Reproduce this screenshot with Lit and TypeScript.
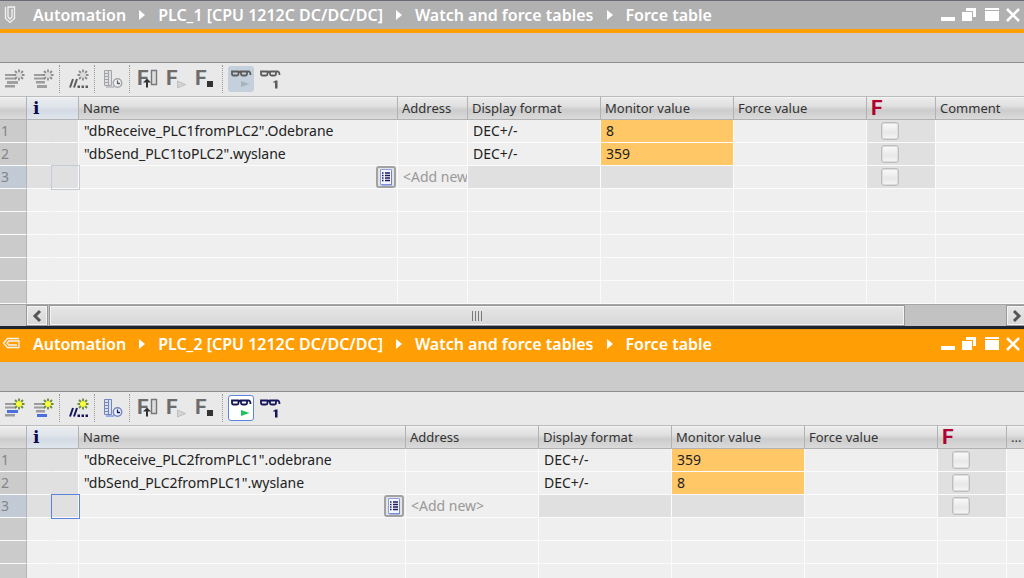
import { LitElement, html, svg, css, nothing } from "lit";
import { customElement, property } from "lit/decorators.js";
import { classMap } from "lit/directives/class-map.js";

interface Entry {
  name: string;
  format: string;
  value: string;
}

/* Star burst shared by the "insert" icons, centred on (18, 9). */
const burst = svg`
  <path class="ray" d="M18 3.500v11M12.500 9h11M14 5l8 8M22 5l-8 8"/>
  <circle class="sun" cx="18" cy="9" r="3"/>`;

const glasses = svg`
  <path class="ink-line frame" d="M4 5.500h6.500v2.500q0 1.500-1.500 1.500h-3.500q-1.500 0-1.500-1.500zM13 5.500h6v2.500q0 1.500-1.500 1.500h-3q-1.500 0-1.500-1.500zM10.500 6h2.500M19 5.500h2q1.500 0.500 1.500 3.500"/>`;

const icons: Record<string, unknown> = {
  insertRow: svg`
    <path class="dim" d="M4 8h9v2h-9zM4 11.500h11v2h-11zM4 19h10v2.500h-10z"/>
    <path class="accent" d="M6 15h11v3h-11z"/>${burst}`,
  addRow: svg`
    <path class="dim" d="M4 8h9v2h-9zM4 11.500h11v2h-11zM6 15h9v2.500h-9z"/>
    <path class="accent" d="M7 19h10v3h-10z"/>${burst}`,
  comment: svg`
    <path class="ink-line thick" d="M5 21.500l3-8.500M9 21.500l3-8.500"/>
    <path class="ink" d="M12.500 19.500h2.500v2.500h-2.500zM16.500 19.500h2.500v2.500h-2.500zM20.500 19.500h2.500v2.500h-2.500z"/>${burst}`,
  timing: svg`
    <path class="sheet" d="M4.500 4.500h7v15h-7zM4.500 7.500h4M4.500 10.500h4M4.500 13.500h4M4.500 16.500h4M8.500 4.500v15"/>
    <path class="accent-soft" d="M6 20h8v2h-8z"/>
    <circle class="clock" cx="17.500" cy="17" r="4.200"/>
    <path class="ink-line" d="M17.500 14.500v3h2.500"/>`,
  forceAll: svg`
    <text class="f" x="2" y="19">F</text>
    <path class="bar" d="M16.500 4.500h5v14h-5z"/>
    <path class="dark" d="M12 12.500l4 4h-3v5h-2v-5h-3z"/>`,
  forceStart: svg`
    <text class="f" x="2" y="19">F</text>
    <path class="faint" d="M13.500 15l8 3.500-8 3.500z"/>`,
  forceStop: svg`
    <text class="f" x="2" y="19">F</text>
    <path class="dark" d="M14 15h6v6h-6z"/>`,
  monitor: svg`${glasses}<path class="play" d="M13 15l8.500 3-8.500 3z"/>`,
  monitorOnce: svg`${glasses}<path class="ink" d="M16 16l2.500-1.500h2v8h-2.500v-6h-2z"/>`,
};

const toolbar: [string, string][][] = [
  [["insertRow", "Insert row"], ["addRow", "Add row"]],
  [["comment", "Insert comment line"]],
  [["timing", "Show advanced columns"]],
  [["forceAll", "Force all"], ["forceStart", "Start forcing"], ["forceStop", "Stop forcing"]],
  [["monitor", "Monitor all"], ["monitorOnce", "Monitor once"]],
];

@customElement("force-pane")
class ForcePane extends LitElement {
  @property({ type: Boolean, reflect: true }) active = false;
  @property({ type: Boolean }) scrollbar = false;
  @property() device = "";
  @property() commentLabel = "";
  @property({ type: Number }) emptyRows = 5;
  @property({ attribute: false }) entries: Entry[] = [];

  static styles = css`
    :host {
      display: block;
      --ink: #5c5c5c;
      --accent: #a0a0a0;
      --ray: #8c8c8c;
      --sun: #dcdcdc;
      --sheet: #a4a4a4;
      --play: #a9b3bd;
      --caption: #b1b1b1;
      --caption-top: #6b6b76;
      --caption-edge: #ff9f05;
      --focus: #c3ccd6;
    }
    :host([active]) {
      --ink: #16165a;
      --accent: #4a6fe0;
      --ray: #6d8a3a;
      --sun: #f6ff3a;
      --sheet: #7286c0;
      --play: #1fc25c;
      --caption: #ff9f05;
      --caption-top: #f09408;
      --caption-edge: #ff9f05;
      --focus: #5b82dc;
    }
    .caption {
      box-sizing: border-box;
      height: 33px;
      display: flex;
      align-items: center;
      padding-left: 2px;
      color: #fff;
      background: var(--caption);
      border-top: 1px solid var(--caption-top);
      border-bottom: 4px solid var(--caption-edge);
      font-weight: 600;
      font-size: 16px;
      line-height: 24px;
    }
    .pin { width: 18px; height: 18px; margin-right: 13px; }
    :host([active]) .pin { transform: rotate(90deg); }
    .path { display: flex; flex: 1; align-items: center; gap: 13px; white-space: nowrap; }
    .path a { color: inherit; text-decoration: none; }
    .path svg { width: 6px; height: 10px; fill: #fff; }
    .window { display: flex; gap: 2px; }
    .window button { width: 20px; height: 20px; }
    .window svg { display: block; width: 20px; height: 20px; fill: #fff; }
    button { padding: 0; border: 0; background: none; box-sizing: border-box; }
    .band { height: 29px; background: #cbcbcb; border-bottom: 1px solid #8f8f8f; }
    .tools {
      box-sizing: border-box;
      height: 33px;
      display: flex;
      align-items: center;
      gap: 3px;
      padding: 0 1px 1px;
      background: #e9e9e9;
    }
    .tools button { width: 26px; height: 26px; border: 1px solid transparent; border-radius: 3px; }
    .tools svg { display: block; width: 26px; height: 26px; margin: -1px; }
    .tools .on { background: #c4d0dc; }
    :host([active]) .tools .on { background: #fff; border-color: #5b86dc; }
    .sep { height: 28px; margin-right: 2px; border-left: 1px dotted #999; }
    .ink { fill: var(--ink); }
    .ink-line { fill: none; stroke: var(--ink); stroke-width: 1.3; }
    .frame { stroke-width: 1.8; }
    .thick { stroke-width: 2; }
    .dim { fill: #9c9c9c; }
    .accent { fill: var(--accent); }
    .accent-soft { fill: var(--accent); opacity: 0.5; }
    .ray { stroke: var(--ray); stroke-width: 1.8; }
    .sun { fill: var(--sun); }
    .sheet { fill: #dde0e6; stroke: var(--sheet); }
    .clock { fill: #f2f4fc; stroke: var(--sheet); stroke-width: 1.5; }
    .f { font: bold 21px Roboto, sans-serif; fill: #6c6c6c; }
    .bar { fill: #ddd; stroke: #777; stroke-width: 1.4; }
    .dark { fill: #333; }
    .faint { fill: #d4d4d4; stroke: #aaa; stroke-width: 0.6; }
    .play { fill: var(--play); }
    table { width: 100%; table-layout: fixed; border-collapse: separate; border-spacing: 0; font-size: 14px; }
    .c-num { width: 27px; }
    .c-flag { width: 25px; }
    .c-info { width: 27px; }
    .c-addr { width: 70px; }
    :host([active]) .c-addr { width: 133px; }
    .c-mid { width: 133px; }
    .c-f { width: 69px; }
    .c-note { width: 88px; }
    :host([active]) .c-note { width: 17px; }
    th, td {
      box-sizing: border-box;
      overflow: hidden;
      padding: 0 0 0 5px;
      text-align: left;
      white-space: nowrap;
      font-weight: 400;
      color: #222;
    }
    thead th {
      height: 24px;
      font-size: 13px;
      line-height: 20px;
      padding-left: 4px;
      border-top: 1px solid #bcbcbc;
      border-right: 1px solid #b2b2b2;
      border-bottom: 1px solid #b2b2b2;
      background: linear-gradient(#ededed, #e0e0e0 40%, #cccccc 60%, #dadada);
      color: #333;
      box-shadow: inset 0 1px #f4f4f4;
    }
    thead .info {
      padding-left: 6px;
      background: linear-gradient(#e9edf2, #dfe4ea 45%, #d3dae3 60%, #dfe5ec);
      color: #0a0a50;
      font: bold 17px/22px "DejaVu Serif", serif;
    }
    thead .force {
      color: #b0002f;
      font: bold 21px/22px Roboto, sans-serif;
    }
    thead th:last-child, td:last-child { border-right: 0; }
    tbody th, td {
      height: 23px;
      line-height: 22px;
      border-right: 1px solid #fbfbfb;
      border-bottom: 1px solid #fbfbfb;
      background: #efefef;
    }
    tbody th { padding-left: 1px; background: #cbcbcb; color: #858585; border-right-color: #b4b4b4; }
    tbody .current { background: #c2cbd5; }
    .flag { border-right-color: transparent; }
    tbody .shade { background-color: #e0e0e0; }
    tbody .live { background: #ffc765; }
    .focus { outline: 1px solid var(--focus); }
    .add { color: #999; }
    .check { padding-left: 14px; }
    .check input {
      appearance: none;
      display: block;
      box-sizing: border-box;
      width: 18px;
      height: 18px;
      margin: 0;
      border: 1px solid #bdbdbd;
      border-radius: 3px;
      box-shadow: inset 0 0 0 1px #dcdcdc;
      background: linear-gradient(#fafafa, #e8e8e8 60%, #f6f6f6);
    }
    .pick { padding: 0; }
    .pick button {
      display: block;
      width: 20px;
      height: 22px;
      margin-left: auto;
      margin-right: 1px;
      border: 2px solid #a2a2a2;
      border-radius: 3px;
      background: #e4e4e4;
    }
    .pick svg { display: block; width: 16px; height: 18px; }
    .scroll {
      box-sizing: border-box;
      height: 22px;
      display: flex;
      overflow: hidden;
      border-top: 1px solid #a6a6a6;
      background: #c2c2c2;
    }
    .corner { width: 26px; background: #cbcbcb; }
    .scroll button, .thumb {
      border: 1px solid #999;
      box-shadow: inset 0 0 0 1px #f4f4f4;
      background: linear-gradient(#e6e6e6, #d8d8d8);
    }
    .scroll button { width: 22px; }
    .scroll button:last-child { margin-right: -4px; }
    .scroll button svg { display: block; width: 20px; height: 18px; fill: none; stroke: #555; stroke-width: 3; }
    .track { flex: 1; display: flex; padding-left: 1px; }
    .thumb { flex: 17; box-sizing: border-box; display: flex; justify-content: center; align-items: center; }
    .rest { flex: 2; }
    .thumb svg { width: 10px; height: 10px; stroke: #777; }
  `;

  private renderCaption() {
    const crumbs = ["Automation", `${this.device} [CPU 1212C DC/DC/DC]`, "Watch and force tables", "Force table"];
    return html`
      <header class="caption">
        <svg class="pin" viewBox="0 0 18 18" fill="none" stroke="#f2f2f2" stroke-width="1.3">
          <path d="M3.500 1v11.500l4.500 4 4.500-4v-11.500h-6.500v10l2 2 2-2v-8"/>
        </svg>
        <nav class="path">
          ${crumbs.map((crumb, i) => html`
            ${i ? html`<svg viewBox="0 0 6 10"><path d="M0 0l6 5-6 5z"/></svg>` : nothing}
            <a href="#">${crumb}</a>`)}
        </nav>
        <div class="window">
          <button aria-label="Minimize"><svg viewBox="0 0 20 20"><path d="M3 12h14v4h-14z"/></svg></button>
          <button aria-label="Restore"><svg viewBox="0 0 20 20"><path d="M2 7h10v9h-10zM6 3h10v9h-3v-6h-7z"/></svg></button>
          <button aria-label="Maximize"><svg viewBox="0 0 20 20"><path d="M3 3h14v2h-14zM3 6h14v10h-14z"/></svg></button>
          <button aria-label="Close"><svg viewBox="0 0 20 20"><path d="M3 4l12 12M15 4l-12 12" stroke="#fff" stroke-width="2.500"/></svg></button>
        </div>
      </header>`;
  }

  private renderTools() {
    return html`
      <div class="tools" role="toolbar">
        ${toolbar.map((group, i) => html`
          ${i ? html`<span class="sep"></span>` : nothing}
          ${group.map(([icon, label]) => html`
            <button class=${classMap({ on: icon === "monitor" })} aria-label=${label}>
              <svg viewBox="0 0 26 26">${icons[icon]}</svg>
            </button>`)}`)}
      </div>`;
  }

  private checkbox(row: number) {
    return html`<td class="check shade"><input type="checkbox" aria-label="Force row ${row}"></td>`;
  }

  private renderTable() {
    const next = this.entries.length + 1;
    return html`
      <table>
        <colgroup>
          <col class="c-num"><col class="c-flag"><col class="c-info"><col>
          <col class="c-addr"><col class="c-mid"><col class="c-mid"><col class="c-mid">
          <col class="c-f"><col class="c-note">
        </colgroup>
        <thead>
          <tr>
            <th></th><th class="info" colspan="2">i</th><th>Name</th><th>Address</th>
            <th>Display format</th><th>Monitor value</th><th>Force value</th>
            <th class="force">F</th><th>${this.commentLabel}</th>
          </tr>
        </thead>
        <tbody>
          ${this.entries.map((entry, i) => html`
            <tr>
              <th>${i + 1}</th><td class="flag shade"></td><td class="shade"></td>
              <td>${entry.name}</td><td></td><td>${entry.format}</td>
              <td class="live">${entry.value}</td><td></td>${this.checkbox(i + 1)}<td></td>
            </tr>`)}
          <tr>
            <th class="current">${next}</th><td class="flag shade"></td><td class="shade focus"></td>
            <td class="pick">
              <button aria-label="Select tag">
                <svg viewBox="0 0 16 18">
                  <path d="M2.500 1.500h11v15h-11z" fill="#f4f6ff" stroke="#8f9ee0"/>
                  <path d="M13.500 3v14h-10" fill="none" stroke="#6f80d8"/>
                  <path d="M4 5h1.500M4 7.500h1.500M4 10h1.500M4 12.500h1.500M7 5h5M7 7.500h5M7 10h5M7 12.500h5" stroke="#1c1c5c" stroke-width="1.300"/>
                </svg>
              </button>
            </td>
            <td class="add">&lt;Add new&gt;</td><td class="shade"></td><td class="shade"></td>
            <td></td>${this.checkbox(next)}<td></td>
          </tr>
          ${Array.from({ length: this.emptyRows }, () => html`
            <tr><th></th><td class="flag"></td><td></td><td></td><td></td><td></td><td></td><td></td><td></td><td></td></tr>`)}
        </tbody>
      </table>`;
  }

  private renderScrollbar() {
    return html`
      <div class="scroll">
        <div class="corner"></div>
        <button aria-label="Scroll left"><svg viewBox="0 0 20 18"><path d="M13 4l-5 5 5 5"/></svg></button>
        <div class="track">
          <div class="thumb"><svg viewBox="0 0 10 10"><path d="M0.500 0v10M3.500 0v10M6.500 0v10M9.500 0v10"/></svg></div>
          <div class="rest"></div>
        </div>
        <button aria-label="Scroll right"><svg viewBox="0 0 20 18"><path d="M7 4l5 5-5 5"/></svg></button>
      </div>`;
  }

  render() {
    return html`
      ${this.renderCaption()}
      <div class="band"></div>
      ${this.renderTools()}
      ${this.renderTable()}
      ${this.scrollbar ? this.renderScrollbar() : nothing}`;
  }
}

@customElement("app-root")
class AppRoot extends LitElement {
  static styles = css`
    :host {
      display: flex;
      flex-direction: column;
      height: 100vh;
      overflow: hidden;
      background: #efefef;
      font-family: "Noto Sans", "Open Sans", sans-serif;
    }
    force-pane { flex: none; }
    .split { flex: none; height: 3px; background: #20242e; }
  `;

  render() {
    return html`
      <force-pane
        scrollbar
        device="PLC_1"
        .commentLabel=${"Comment"}
        .emptyRows=${5}
        .entries=${[
          { name: '"dbReceive_PLC1fromPLC2".Odebrane', format: "DEC+/-", value: "8" },
          { name: '"dbSend_PLC1toPLC2".wyslane', format: "DEC+/-", value: "359" },
        ]}
      ></force-pane>
      <div class="split"></div>
      <force-pane
        active
        device="PLC_2"
        .commentLabel=${"..."}
        .emptyRows=${3}
        .entries=${[
          { name: '"dbReceive_PLC2fromPLC1".odebrane', format: "DEC+/-", value: "359" },
          { name: '"dbSend_PLC2fromPLC1".wyslane', format: "DEC+/-", value: "8" },
        ]}
      ></force-pane>`;
  }
}
